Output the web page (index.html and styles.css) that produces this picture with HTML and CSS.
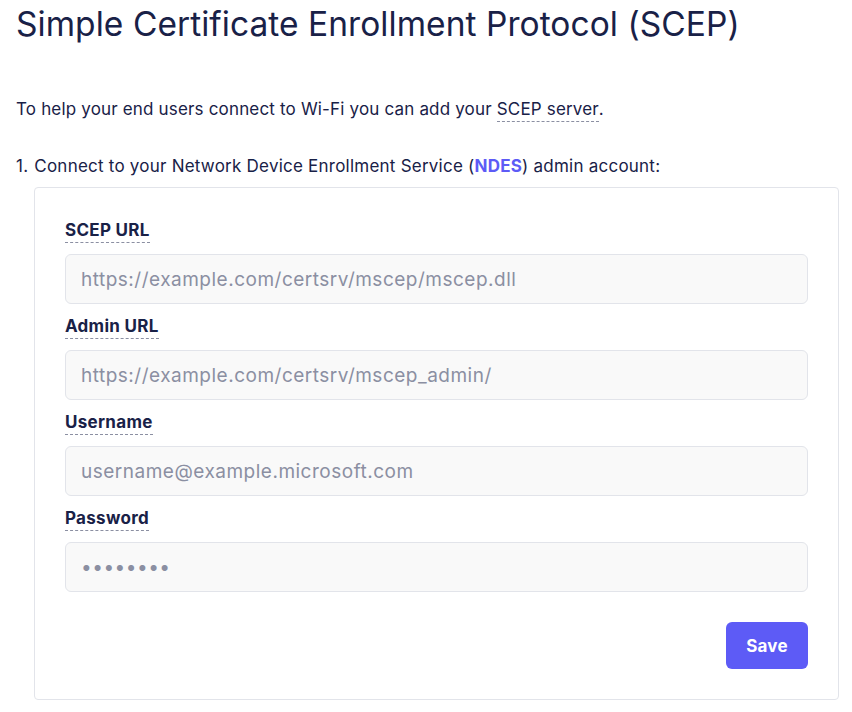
FILE: index.html
```html
<!DOCTYPE html>
<html>
<head>
<meta charset="utf-8">
<link rel="stylesheet" href="styles.css">
</head>
<body>
<div class="page">
  <h1 class="title">Simple Certificate Enrollment Protocol (SCEP)</h1>
  <p class="intro">To help your end users connect to Wi-Fi you can add your <span class="tip">SCEP server</span>.</p>
  <ol class="steps">
    <li class="step">
      <span class="step-text">Connect to your Network Device Enrollment Service (<a class="link">NDES</a>) admin account:</span>
      <form class="card">
        <div class="field">
          <label class="label">SCEP URL</label>
          <input class="input" type="text" placeholder="https://example.com/certsrv/mscep/mscep.dll">
        </div>
        <div class="field">
          <label class="label">Admin URL</label>
          <input class="input" type="text" placeholder="https://example.com/certsrv/mscep_admin/">
        </div>
        <div class="field">
          <label class="label">Username</label>
          <input class="input" type="text" placeholder="username@example.microsoft.com">
        </div>
        <div class="field">
          <label class="label">Password</label>
          <input class="input" type="password" placeholder="••••••••">
        </div>
        <div class="actions">
          <button class="btn" type="button">Save</button>
        </div>
      </form>
    </li>
  </ol>
</div>
</body>
</html>
```
FILE: styles.css
```css
* { box-sizing: border-box; }
html, body { margin: 0; padding: 0; background: #fff; }
body {
  font-family: Inter, "Noto Sans", sans-serif;
  color: #192147;
  font-size: 17px;
  letter-spacing: 0.2px;
  line-height: 24px;
}
.page {
  padding: 4px 13px 0 16px;
}
.title {
  margin: 0;
  font-size: 33.5px;
  letter-spacing: 0.05px;
  line-height: 40px;
  font-weight: 400;
  color: #192147;
}
.intro {
  margin: 53px 0 0 0;
  letter-spacing: 0.17px;
}
.tip {
  display: inline-block;
  border-bottom: 1px dashed #8b8fa2;
}
.steps {
  margin: 32px 0 0 0;
  padding: 0;
  list-style: none;
  letter-spacing: 0.23px;
}
.step-text::before {
  content: "1.";
  margin-right: 6px;
}
.link {
  color: #5d5bf6;
  font-weight: 700;
  text-decoration: none;
}
.card {
  margin: 9px 0 0 18px;
  border: 1px solid #e2e4ea;
  border-radius: 4px;
  padding: 30px;
  display: flex;
  flex-direction: column;
  gap: 10px;
  letter-spacing: 0.2px;
}
.field {
  display: flex;
  flex-direction: column;
  align-items: flex-start;
  gap: 11px;
}
.label {
  display: inline-block;
  font-weight: 700;
  letter-spacing: 0.3px;
  line-height: 24px;
  border-bottom: 1px dashed #8b8fa2;
}
.input {
  width: 100%;
  height: 50px;
  border: 1px solid #e2e4ea;
  border-radius: 6px;
  background: #f9f9f9;
  padding: 0 15px;
  font-family: Inter, "Noto Sans", sans-serif;
  font-size: 19px;
  letter-spacing: 0.5px;
  color: #192147;
  outline: none;
}
.input::placeholder {
  color: #8b8fa2;
  opacity: 1;
}
.actions {
  display: flex;
  justify-content: flex-end;
  margin-top: 20px;
}
.btn {
  height: 47px;
  width: 82px;
  border: none;
  border-radius: 6px;
  background: #5d5bf6;
  color: #fff;
  font-family: Inter, "Noto Sans", sans-serif;
  font-size: 17px;
  letter-spacing: 0.2px;
  font-weight: 700;
  cursor: pointer;
}
```
